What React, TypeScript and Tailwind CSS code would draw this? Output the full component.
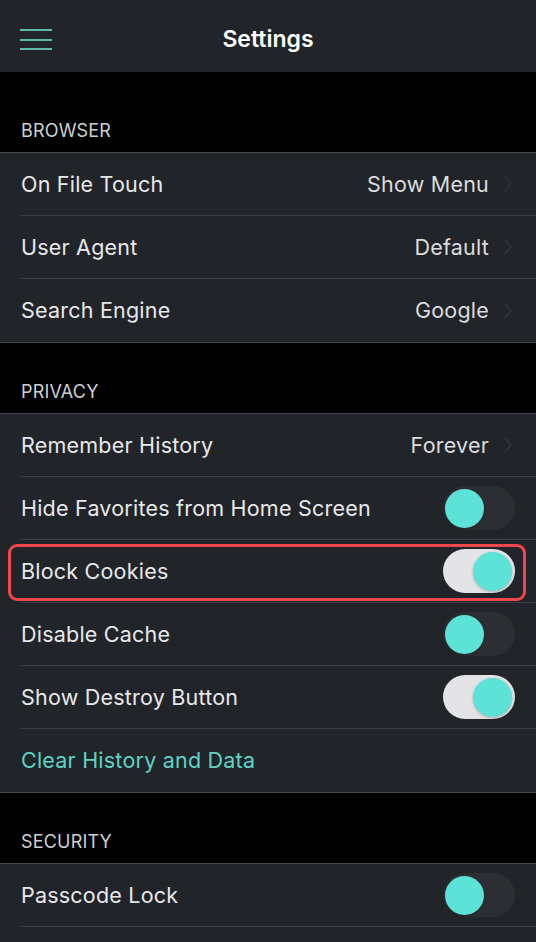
import React from "react";

type Row = {
  label: string;
  value?: string;
  toggle?: "on" | "off";
  accent?: boolean;
  highlight?: boolean;
};

const sections: { title: string; top: string; rows: Row[]; more?: boolean }[] = [
  {
    title: "BROWSER",
    top: "h-[80px]",
    rows: [
      { label: "On File Touch", value: "Show Menu" },
      { label: "User Agent", value: "Default" },
      { label: "Search Engine", value: "Google" },
    ],
  },
  {
    title: "PRIVACY",
    top: "h-[70px]",
    rows: [
      { label: "Remember History", value: "Forever" },
      { label: "Hide Favorites from Home Screen", toggle: "off" },
      { label: "Block Cookies", toggle: "on", highlight: true },
      { label: "Disable Cache", toggle: "off" },
      { label: "Show Destroy Button", toggle: "on" },
      { label: "Clear History and Data", accent: true },
    ],
  },
  {
    title: "SECURITY",
    top: "h-[70px]",
    more: true,
    rows: [{ label: "Passcode Lock", toggle: "off" }, { label: "" }],
  },
];

const Toggle: React.FC<{ on: boolean }> = ({ on }) => (
  <div
    className={
      on
        ? "w-[72px] h-[44px] rounded-full bg-[#e4e4e6] flex items-center justify-end pr-[3px]"
        : "w-[72px] h-[44px] rounded-full bg-[#2d2e33] flex items-center justify-start pl-[2px]"
    }
  >
    <div className="w-[39px] h-[39px] rounded-full bg-[#5ce2d6] shadow-[0_1px_3px_rgba(0,0,0,0.25)]" />
  </div>
);

const Chevron = () => (
  <svg width="10" height="18" viewBox="0 0 10 18" className="ml-[14px]">
    <path d="M2 2l6 7-6 7" fill="none" stroke="#2f3237" strokeWidth="2" strokeLinecap="round" strokeLinejoin="round" />
  </svg>
);

const App: React.FC = () => {
  return (
    <div className="w-[536px] h-[942px] overflow-hidden bg-black font-['Inter',sans-serif] antialiased">
      <div className="h-[72px] bg-[#212429] grid grid-cols-[1fr_auto_1fr] items-center pt-[7px]">
        <div className="pl-[20px] flex flex-col gap-[7.5px] w-fit">
          <div className="w-[32px] h-[2px] bg-[#5fb9ab]" />
          <div className="w-[32px] h-[2px] bg-[#5fb9ab]" />
          <div className="w-[32px] h-[2px] bg-[#5fb9ab]" />
        </div>
        <h1 className="text-[23px] font-semibold text-white">Settings</h1>
        <div />
      </div>

      {sections.map((section) => (
        <div key={section.title}>
          <div className={`${section.top} flex items-end px-[21px] pb-[9px]`}>
            <span className="text-[18px] leading-[24px] text-[#cfcfd1] tracking-[0.01em]">{section.title}</span>
          </div>
          <div className="border-y border-[#47494d] bg-[#212429]">
            {section.rows.map((row, i) => {
              const last = i === section.rows.length - 1 && !section.more;
              return (
                <div key={row.label + i} className="relative h-[63px] pl-[21px] flex">
                  <div
                    className={`flex-1 flex items-center justify-between pr-[21px] ${
                      last ? "" : "border-b border-[#3b3d42]"
                    }`}
                  >
                    <span
                      className={`text-[21.5px] tracking-[0.01em] ${row.accent ? "text-[#5fd3c5]" : "text-[#e8e8ea]"}`}
                    >
                      {row.label}
                    </span>
                    {row.value && (
                      <div className="flex items-center pr-[2px]">
                        <span className="text-[21.5px] tracking-[0.01em] text-[#dcdcde]">{row.value}</span>
                        <Chevron />
                      </div>
                    )}
                    {row.toggle && <Toggle on={row.toggle === "on"} />}
                  </div>
                  {row.highlight && (
                    <div className="absolute left-[8px] right-[10px] top-[4px] bottom-[2px] border-[3px] border-[#f2464a] rounded-[9px]" />
                  )}
                </div>
              );
            })}
          </div>
        </div>
      ))}
    </div>
  );
};

export default App;
